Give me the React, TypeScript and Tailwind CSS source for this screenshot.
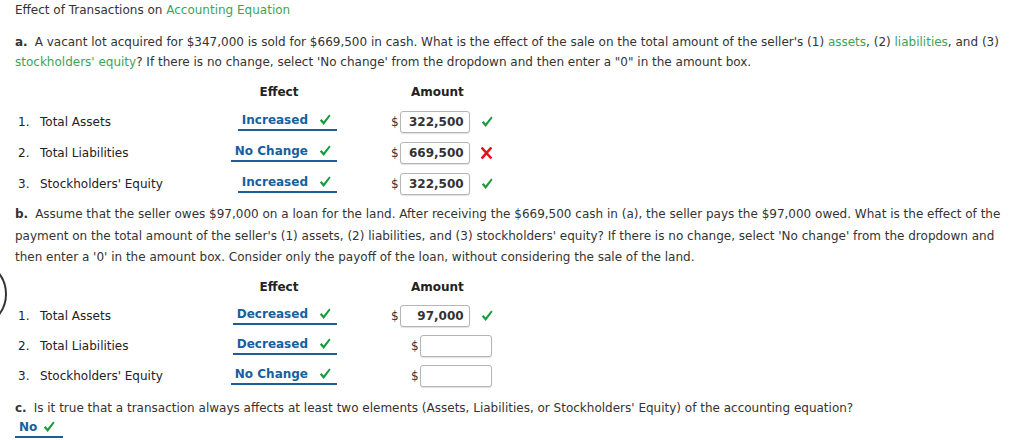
import React from 'react';

const font = { fontFamily: '"DejaVu Sans", Verdana, sans-serif' };

function Check() {
  return (
    <svg width="12" height="12" viewBox="0 0 12 12" className="shrink-0">
      <path d="M0.8 6.6 L2.6 5 L4.6 7.4 L10.2 0.6 L11.6 1.8 L4.7 11 Z" fill="#199b3b" />
    </svg>
  );
}

function Cross() {
  return (
    <svg width="11" height="12" viewBox="0 0 11 12" className="shrink-0">
      <path d="M1.5 1.5 L9.5 10.5 M9.5 1.5 L1.5 10.5" stroke="#e8101a" strokeWidth="2.6" strokeLinecap="square" />
    </svg>
  );
}

function Dropdown({ value }: { value: string }) {
  return (
    <span className="inline-flex items-center border-b-2 border-[#1b5e9b] pb-[1px] pl-[4px] pr-[6px] leading-[15px]">
      <span className="font-bold text-[#16609f]">{value}</span>
      <span className="ml-[11px]"><Check /></span>
    </span>
  );
}

function Amount({ value, mark }: { value?: string; mark?: 'ok' | 'bad' }) {
  return (
    <div className="flex items-center">
      <span className="text-[#333] mr-[1px]">$</span>
      <div className={`h-[22px] ${value ? 'w-[70px]' : 'w-[72px]'} border border-[#b5b5b5] rounded-[3px] shadow-[0_1px_1px_rgba(0,0,0,0.12)] bg-white flex items-center justify-end pr-[5px] font-bold text-[12px] text-[#333]`}>
        {value}
      </div>
      {mark && (
        <span className="ml-[11px]">{mark === 'ok' ? <Check /> : <Cross />}</span>
      )}
    </div>
  );
}

interface Row {
  n: string;
  label: string;
  effect: string;
  amount?: string;
  mark?: 'ok' | 'bad';
}

function Table({ rows, rowH, amountPad }: { rows: Row[]; rowH: string; amountPad: (r: Row) => string }) {
  return (
    <div>
      <div className="grid grid-cols-[205px_118px_200px] leading-[20px] font-bold text-[#222] mb-[4px]">
        <div />
        <div className="text-center">Effect</div>
        <div className="pl-[73px]">Amount</div>
      </div>
      {rows.map(r => (
        <div key={r.n} className={`grid grid-cols-[205px_118px_200px] items-center ${rowH}`}>
          <div className="flex pl-[3px] text-[#222]">
            <span className="w-[22px]">{r.n}</span>
            <span>{r.label}</span>
          </div>
          <div className="flex justify-end pr-[1px]">
            <Dropdown value={r.effect} />
          </div>
          <div className={amountPad(r)}>
            <Amount value={r.amount} mark={r.mark} />
          </div>
        </div>
      ))}
    </div>
  );
}

export default function App() {
  const rowsA: Row[] = [
    { n: '1.', label: 'Total Assets', effect: 'Increased', amount: '322,500', mark: 'ok' },
    { n: '2.', label: 'Total Liabilities', effect: 'No Change', amount: '669,500', mark: 'bad' },
    { n: '3.', label: "Stockholders' Equity", effect: 'Increased', amount: '322,500', mark: 'ok' },
  ];
  const rowsB: Row[] = [
    { n: '1.', label: 'Total Assets', effect: 'Decreased', amount: '97,000', mark: 'ok' },
    { n: '2.', label: 'Total Liabilities', effect: 'Decreased' },
    { n: '3.', label: "Stockholders' Equity", effect: 'No Change' },
  ];

  return (
    <div className="relative w-[1023px] h-[442px] overflow-hidden bg-white text-[12px] text-[#333]" style={font}>
      {/* partly hidden circle on the left edge */}
      <div className="absolute left-[-63px] top-[259px] w-[70px] h-[70px] rounded-full border-2 border-[#333]" />

      <div className="pl-[15px] pr-[8px]">
        <div className="leading-[20px]">
          Effect of Transactions on <span className="text-[#3ca35b]">Accounting Equation</span>
        </div>

        <p className="mt-[12px] leading-[20px]">
          <span className="font-bold mr-[7px]">a.</span>A vacant lot acquired for $347,000 is sold for $669,500 in cash. What is the effect of the sale on the total amount of the seller's (1) <span className="text-[#3ca35b]">assets</span>, (2) <span className="text-[#3ca35b]">liabilities</span>, and (3) <span className="text-[#3ca35b]">stockholders' equity</span>? If there is no change, select 'No change' from the dropdown and then enter a "0" in the amount box.
        </p>

        <div className="mt-[10px]">
          <Table rows={rowsA} rowH="h-[31px]" amountPad={() => 'pl-[53px]'} />
        </div>

        <p className="mt-[5px] leading-[21.5px]">
          <span className="font-bold mr-[7px]">b.</span>Assume that the seller owes $97,000 on a loan for the land. After receiving the $669,500 cash in (a), the seller pays the $97,000 owed. What is the effect of the payment on the total amount of the seller's (1) assets, (2) liabilities, and (3) stockholders' equity? If there is no change, select 'No change' from the dropdown and then enter a '0' in the amount box. Consider only the payoff of the loan, without considering the sale of the land.
        </p>

        <div className="mt-[8px]">
          <Table rows={rowsB} rowH="h-[30px]" amountPad={r => (r.amount ? 'pl-[53px]' : 'pl-[73px]')} />
        </div>

        <p className="mt-[7px] leading-[20px]">
          <span className="font-bold mr-[7px]">c.</span>Is it true that a transaction always affects at least two elements (Assets, Liabilities, or Stockholders' Equity) of the accounting equation?
        </p>
        <div className="leading-[15px] mt-[2px]">
          <span className="inline-flex items-center border-b-2 border-[#1b5e9b] pb-[1px] pl-[4px] pr-[8px]">
            <span className="font-bold text-[#16609f]">No</span>
            <span className="ml-[6px]"><Check /></span>
          </span>
        </div>
      </div>
    </div>
  );
}
